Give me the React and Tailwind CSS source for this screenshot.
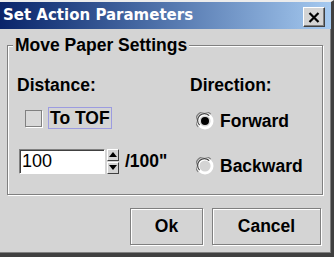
const sans = "font-['Liberation_Sans',Arial,sans-serif]";

const Etched = "border border-[#808080] shadow-[inset_1px_1px_0_#fff,1px_1px_0_#fff]";

function CloseButton() {
  return (
    <button className="ml-auto mr-[6px] mt-[3px] w-[22px] h-[20px] bg-[#d4d4d4] flex items-center justify-center border border-t-white border-l-white border-r-[#404040] border-b-[#404040] shadow-[inset_-1px_-1px_0_#808080]">
      <svg width="12" height="11" viewBox="0 0 12 11">
        <path d="M1.5 1 L10.5 10 M10.5 1 L1.5 10" stroke="#000" strokeWidth="2.2" />
      </svg>
    </button>
  );
}

function Radio({ checked }) {
  return (
    <svg width="18" height="18" viewBox="0 0 18 18">
      <circle cx="9" cy="9" r="8.5" fill="#fff" />
      <path d="M2.2 14.8 A8 8 0 0 1 14.8 2.2" stroke="#808080" strokeWidth="1.2" fill="none" />
      <path d="M3.6 13.2 A6.4 6.4 0 0 1 13.2 3.6" stroke="#404040" strokeWidth="1.2" fill="none" />
      <circle cx="9" cy="9" r="5.6" fill="#d4d4d4" />
      {checked && <circle cx="9" cy="9" r="4" fill="#000" />}
    </svg>
  );
}

function Spinner() {
  return (
    <div className="flex flex-col ml-[2px] w-[12px] h-[25px] gap-[1px]">
      {["up", "down"].map((d) => (
        <div
          key={d}
          className="flex-1 flex items-center justify-center bg-[#d4d4d4] border border-t-white border-l-white border-r-[#404040] border-b-[#404040]"
        >
          <svg width="8" height="5" viewBox="0 0 8 5">
            <path d={d === "up" ? "M0 5 L4 0 L8 5 Z" : "M0 0 L4 5 L8 0 Z"} fill="#000" />
          </svg>
        </div>
      ))}
    </div>
  );
}

export default function App() {
  return (
    <div className={`${sans} w-[334px] h-[257px] bg-[#d4d4d4] flex flex-col border-t-2 border-t-[#ececec] border-r-[3px] border-r-[#404040] border-b-[4px] border-b-[#404040] overflow-hidden text-black`}>
      <div className="h-[27px] flex items-center bg-linear-to-r from-[#0a246a] to-[#a6caf0]">
        <span className="pl-[3px] text-white font-bold text-[15px] font-['DejaVu_Sans',Verdana,sans-serif]">
          Set Action Parameters
        </span>
        <CloseButton />
      </div>

      <div className="flex-1 flex flex-col px-[7px] pt-[6px] border-r border-b border-[#808080]">
        <fieldset className={`${Etched} p-0 m-0 pb-[17px]`}>
          <legend className="ml-[5px] px-[2px] bg-[#d4d4d4] font-bold text-[17.5px] leading-[20px]">
            Move Paper Settings
          </legend>
          <div className="flex font-bold text-[17.5px]">
            <div className="flex flex-col pl-[9px] w-[182px]">
              <div className="leading-[21px] mt-[20px]">Distance:</div>
              <div className="flex items-center h-[22px] mt-[11px]">
                <div className="ml-[8px] w-[17px] h-[17px] border border-[#808080] shadow-[1px_1px_0_#fff] bg-[#d8d8d8]" />
                <span className="ml-[6px] border border-[#9c9ce0] px-[1px] leading-[20px]">To TOF</span>
              </div>
              <div className="flex items-center mt-[19px]">
                <div className="ml-[2px] w-[86px] h-[25px] bg-white border border-t-[#808080] border-l-[#808080] border-r-white border-b-white shadow-[inset_1px_1px_0_#404040] flex items-center pl-[2px] font-normal text-[18px]">
                  100
                </div>
                <Spinner />
                <span className="ml-[6px]">/100"</span>
              </div>
            </div>
            <div className="flex flex-col">
              <div className="leading-[21px] mt-[20px]">Direction:</div>
              <div className="flex items-center h-[22px] mt-[14px] ml-[6px] gap-[6px]">
                <Radio checked />
                <span>Forward</span>
              </div>
              <div className="flex items-center h-[22px] mt-[23px] ml-[6px] gap-[6px]">
                <Radio />
                <span>Backward</span>
              </div>
            </div>
          </div>
        </fieldset>

        <div className="flex justify-end gap-[9px] mt-[13px] mr-[2px] font-bold text-[17.5px]">
          <button className={`${Etched} w-[73px] h-[37px]`}>Ok</button>
          <button className={`${Etched} w-[109px] h-[37px]`}>Cancel</button>
        </div>
      </div>
    </div>
  );
}
